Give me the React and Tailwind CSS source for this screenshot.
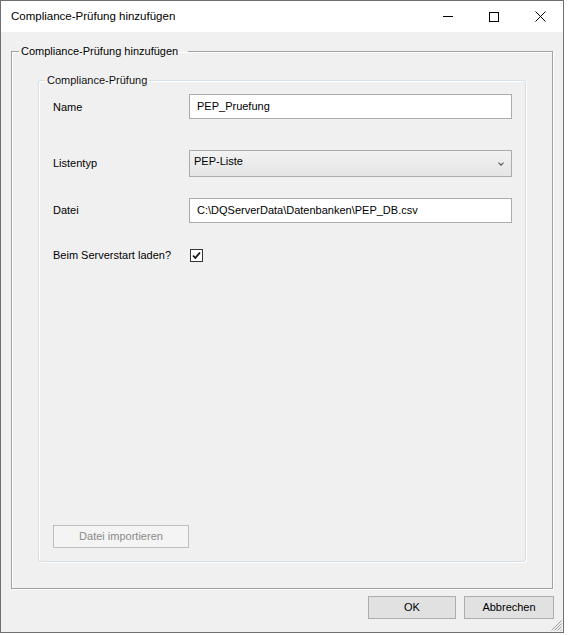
export default function App() {
  return (
    <div className="w-[568px] h-[635px] bg-white font-['Liberation_Sans',Arial,sans-serif] text-[11px] text-black">
      <div className="relative w-[564px] h-[633px] border border-[#707070] bg-[#f0f0f0] flex flex-col">
        {/* Title bar */}
        <div className="h-[31px] bg-white flex items-center shrink-0">
          <span className="pl-[10px] text-[11.5px] text-black">Compliance-Prüfung hinzufügen</span>
          <div className="ml-auto flex h-full">
            <div className="w-[46px] flex items-center justify-center">
              <div className="w-[10px] h-px bg-black" />
            </div>
            <div className="w-[46px] flex items-center justify-center">
              <div className="w-[10px] h-[10px] border border-black" />
            </div>
            <div className="w-[46px] flex items-center justify-center">
              <svg width="11" height="11" viewBox="0 0 11 11">
                <path d="M0.5 0.5 L10.5 10.5 M10.5 0.5 L0.5 10.5" stroke="#000" strokeWidth="1" fill="none" />
              </svg>
            </div>
          </div>
        </div>

        {/* Body */}
        <div className="flex flex-col">
          <fieldset className="mx-[10px] mt-[11px] border border-[#a0a0a0] shadow-[inset_1px_1px_0_#ffffff,1px_1px_0_#ffffff]">
            <legend className="ml-[7px] pl-[2px] pr-[10px] leading-[16px]">Compliance-Prüfung hinzufügen</legend>
            <fieldset className="mx-[26px] mt-[14px] mb-[26px] rounded-[3px] border border-[#d5dfe5] shadow-[inset_1px_1px_0_#ffffff,1px_1px_0_#ffffff]">
              <legend className="ml-[6px] px-[2px] leading-[14px] text-[#111]">Compliance-Prüfung</legend>
              <div className="h-[474px] flex flex-col pl-[14px] pr-[13px] pt-[7px] pb-[13px]">
                <div className="flex items-center h-[25px]">
                  <span className="w-[136px] pt-px">Name</span>
                  <div className="w-[323px] h-[25px] border border-[#ababab] bg-white flex items-center pl-[7px]">
                    PEP_Pruefung
                  </div>
                </div>
                <div className="flex items-center h-[27px] mt-[31px]">
                  <span className="w-[136px]">Listentyp</span>
                  <div className="w-[323px] h-[27px] border border-[#acacac] bg-gradient-to-b from-[#f2f2f2] to-[#e5e5e5] flex items-start pl-[4px] pt-[2px] pr-[7px]">
                    <span className="flex-1">PEP-Liste</span>
                    <svg width="6" height="4" viewBox="0 0 6 4" className="mt-[9px]">
                      <path d="M0.5 0.7 L3 3.2 L5.5 0.7" stroke="#555" strokeWidth="1.1" fill="none" />
                    </svg>
                  </div>
                </div>
                <div className="flex items-center h-[25px] mt-[21px]">
                  <span className="w-[136px]">Datei</span>
                  <div className="w-[323px] h-[25px] border border-[#ababab] bg-white flex items-center pl-[7px]">
                    C:\DQServerData\Datenbanken\PEP_DB.csv
                  </div>
                </div>
                <div className="flex items-center h-[14px] mt-[25px]">
                  <span className="w-[137px]">Beim Serverstart laden?</span>
                  <div className="w-[13px] h-[13px] border border-[#333333] bg-white flex items-center justify-center">
                    <svg width="11" height="11" viewBox="0 0 11 11">
                      <path d="M2 5.5 L4.3 8 L9 2.5" stroke="#111" strokeWidth="1.8" fill="none" />
                    </svg>
                  </div>
                </div>
                <div className="flex-1" />
                <div className="w-[136px] h-[23px] border border-[#bfbfbf] bg-[#f4f4f4] flex items-center justify-center text-[#8a8a8a]">
                  Datei importieren
                </div>
              </div>
            </fieldset>
          </fieldset>

          <div className="flex justify-end gap-[8px] pr-[9px] mt-[7px]">
            <div className="w-[88px] h-[23px] border border-[#adadad] bg-[#e1e1e1] flex items-center justify-center">OK</div>
            <div className="w-[90px] h-[23px] border border-[#adadad] bg-[#e1e1e1] flex items-center justify-center">Abbrechen</div>
          </div>
        </div>

        {/* Resize grip */}
        <svg width="12" height="12" viewBox="0 0 12 12" className="absolute right-[1px] bottom-[1px]">
          <path d="M11.5 1.5 L1.5 11.5 M11.5 4.5 L4.5 11.5 M11.5 7.5 L7.5 11.5 M11.5 10.5 L10.5 11.5" stroke="#9a9a9a" strokeWidth="1" fill="none" />
        </svg>
      </div>
    </div>
  );
}
